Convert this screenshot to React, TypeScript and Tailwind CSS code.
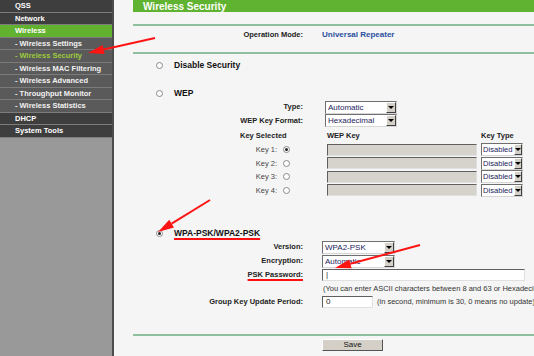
import React from 'react';

const menu: { label: string; kind: 'main' | 'sub' | 'active' | 'subActive' }[] = [
  { label: 'QSS', kind: 'main' },
  { label: 'Network', kind: 'main' },
  { label: 'Wireless', kind: 'active' },
  { label: '- Wireless Settings', kind: 'sub' },
  { label: '- Wireless Security', kind: 'subActive' },
  { label: '- Wireless MAC Filtering', kind: 'sub' },
  { label: '- Wireless Advanced', kind: 'sub' },
  { label: '- Throughput Monitor', kind: 'sub' },
  { label: '- Wireless Statistics', kind: 'sub' },
  { label: 'DHCP', kind: 'main' },
  { label: 'System Tools', kind: 'main' },
];

const rowBg = {
  main: 'bg-[#3e3e3e] text-white',
  sub: 'bg-[#5a5a5a] text-[#f2f2f2]',
  active: 'bg-[#62b22f] text-white',
  subActive: 'bg-[#5a5a5a] text-[#9ccc3a]',
};

function Radio({ on }: { on?: boolean }) {
  return (
    <span className="w-[7px] h-[7px] rounded-full border border-[#8a8a8a] bg-white flex items-center justify-center shrink-0">
      {on && <span className="w-[3px] h-[3px] rounded-full bg-[#222]" />}
    </span>
  );
}

function Sel({ value, w, small }: { value: string; w: string; small?: boolean }) {
  return (
    <div className={`${w} h-[13px] flex bg-white border border-[#6f6f6f] border-r-[#d6d6d6] border-b-[#d6d6d6]`}>
      <span
        className={`flex-1 ${small ? 'pl-[1px] text-[7.6px]' : 'pl-[2px] text-[8px]'} leading-[11px] text-[#1c1c5c] overflow-hidden whitespace-nowrap`}
      >
        {value}
      </span>
      <span
        className={`${small ? 'w-[8px]' : 'w-[10px]'} bg-[#d4d0c8] border border-white border-r-[#404040] border-b-[#404040] flex items-center justify-center`}
      >
        <span className="w-0 h-0 border-l-[3px] border-r-[3px] border-t-[3px] border-l-transparent border-r-transparent border-t-black" />
      </span>
    </div>
  );
}

function Field({ w, gray, children }: { w: string; gray?: boolean; children?: React.ReactNode }) {
  return (
    <div
      className={`${w} h-[12px] border border-[#5f5f5f] border-r-[#e0e0e0] border-b-[#e0e0e0] ${gray ? 'bg-[#d6d3cc]' : 'bg-white'} text-[8px] leading-[10px] pl-[3px] text-[#222]`}
    >
      {children}
    </div>
  );
}

function Label({ children, red }: { children: React.ReactNode; red?: boolean }) {
  return (
    <div className="w-[189px] text-right text-[7.5px] font-bold text-[#222] whitespace-nowrap">
      <span className={red ? 'underline decoration-[#ff1010] decoration-2 underline-offset-[2px]' : ''}>{children}</span>
    </div>
  );
}

function Arrow({ x1, y1, x2, y2 }: { x1: number; y1: number; x2: number; y2: number }) {
  const dx = x1 - x2;
  const dy = y1 - y2;
  const len = Math.hypot(dx, dy);
  const ux = dx / len;
  const uy = dy / len;
  const bx = x2 + ux * 16;
  const by = y2 + uy * 16;
  const nx = -uy * 4.5;
  const ny = ux * 4.5;
  return (
    <g>
      <line x1={x1} y1={y1} x2={bx} y2={by} stroke="#ff1414" strokeWidth={2} />
      <polygon points={`${x2},${y2} ${bx + nx},${by + ny} ${bx - nx},${by - ny}`} fill="#ff1414" />
    </g>
  );
}

export default function App() {
  return (
    <div className="relative w-[534px] h-[356px] flex overflow-hidden font-['Liberation_Sans',Arial,sans-serif]">
      {/* sidebar */}
      <div className="w-[114px] shrink-0 bg-[#999999] border-r-2 border-[#4d4d4d] flex flex-col">
        {menu.map(m => (
          <div
            key={m.label}
            className={`h-[12.5px] border-b border-[#7c7c7c] flex items-center pl-[15px] text-[7.5px] font-bold whitespace-nowrap ${rowBg[m.kind]}`}
          >
            {m.label}
          </div>
        ))}
      </div>

      {/* content */}
      <div className="flex-1 bg-[#f5f5f5] flex flex-col">
        <div className="ml-[19px] h-[12px] shrink-0 bg-[#60b330] flex items-center pl-[10px] text-[10px] font-bold text-white">
          Wireless Security
        </div>
        <div className="h-[12px] shrink-0" />
        <div className="ml-[19px] border-t-2 border-[#8fbf9f]" />
        <div className="h-[18px] shrink-0 flex items-center">
          <Label>Operation Mode:</Label>
          <span className="ml-[19px] text-[8px] font-bold text-[#2a4f9e]">Universal Repeater</span>
        </div>
        <div className="h-[8px] shrink-0" />
        <div className="ml-[19px] border-t-2 border-[#8fbf9f]" />

        <div className="h-[22px] shrink-0 flex items-center pl-[42px] gap-[11px]">
          <Radio />
          <span className="text-[8.5px] font-bold text-[#111]">Disable Security</span>
        </div>
        <div className="h-[10px] shrink-0" />

        <div className="h-[14px] shrink-0 flex items-center pl-[42px] gap-[11px]">
          <Radio />
          <span className="text-[8.5px] font-bold text-[#111]">WEP</span>
        </div>
        <div className="h-[14px] shrink-0 flex items-center">
          <Label>Type:</Label>
          <div className="ml-[22px]"><Sel value="Automatic" w="w-[72px]" /></div>
        </div>
        <div className="h-[13px] shrink-0 flex items-center">
          <Label>WEP Key Format:</Label>
          <div className="ml-[22px]"><Sel value="Hexadecimal" w="w-[72px]" /></div>
        </div>
        <div className="h-[2px] shrink-0" />
        <div className="h-[14px] shrink-0 flex items-center text-[7.5px] font-bold text-[#222]">
          <span className="ml-[126px] w-[87px]">Key Selected</span>
          <span className="w-[154px]">WEP Key</span>
          <span>Key Type</span>
        </div>
        {[1, 2, 3, 4].map(k => (
          <div key={k} className="h-[13.5px] shrink-0 flex items-center">
            <span className="w-[163px] text-right text-[7.5px] text-[#444]">Key {k}:</span>
            <span className="ml-[6px]"><Radio on={k === 1} /></span>
            <div className="ml-[37px]"><Field w="w-[150px]" gray /></div>
            <div className="ml-[4px]"><Sel value="Disabled" w="w-[42px]" small /></div>
          </div>
        ))}

        <div className="h-[29px] shrink-0" />
        <div className="h-[14px] shrink-0 flex items-center pl-[42px] gap-[11px]">
          <Radio on />
          <span className="text-[8.5px] font-bold text-[#111] underline decoration-[#ff1010] decoration-2 underline-offset-[2px]">
            WPA-PSK/WPA2-PSK
          </span>
        </div>
        <div className="h-[14px] shrink-0 flex items-center">
          <Label>Version:</Label>
          <div className="ml-[19px]"><Sel value="WPA2-PSK" w="w-[73px]" /></div>
        </div>
        <div className="h-[14px] shrink-0 flex items-center">
          <Label>Encryption:</Label>
          <div className="ml-[19px]"><Sel value="Automatic" w="w-[73px]" /></div>
        </div>
        <div className="h-[14px] shrink-0 flex items-center">
          <Label red>PSK Password:</Label>
          <div className="ml-[19px]"><Field w="w-[203px]">|</Field></div>
        </div>
        <div className="h-[13px] shrink-0 flex items-center pl-[209px] text-[7.5px] text-[#333] whitespace-nowrap">
          (You can enter ASCII characters between 8 and 63 or Hexadecimal characters between 8 and 64.)
        </div>
        <div className="h-[13px] shrink-0 flex items-center whitespace-nowrap">
          <Label>Group Key Update Period:</Label>
          <div className="ml-[19px]"><Field w="w-[51px]">0</Field></div>
          <span className="ml-[4px] text-[7.5px] text-[#333]">(in second, minimum is 30, 0 means no update)</span>
        </div>

        <div className="h-[26px] shrink-0" />
        <div className="ml-[19px] border-t-2 border-[#8fbf9f]" />
        <div className="flex pt-[3px] pl-[208px]">
          <button className="w-[61px] h-[12px] bg-[#d4d0c8] border border-white border-r-[#555] border-b-[#555] text-[8px] leading-[10px] text-[#111]">
            Save
          </button>
        </div>
      </div>

      <svg className="absolute inset-0 pointer-events-none" width={534} height={356}>
        <Arrow x1={155} y1={38} x2={88} y2={53} />
        <Arrow x1={210} y1={200} x2={158} y2={232} />
        <Arrow x1={420} y1={245} x2={335} y2={268} />
      </svg>
    </div>
  );
}
